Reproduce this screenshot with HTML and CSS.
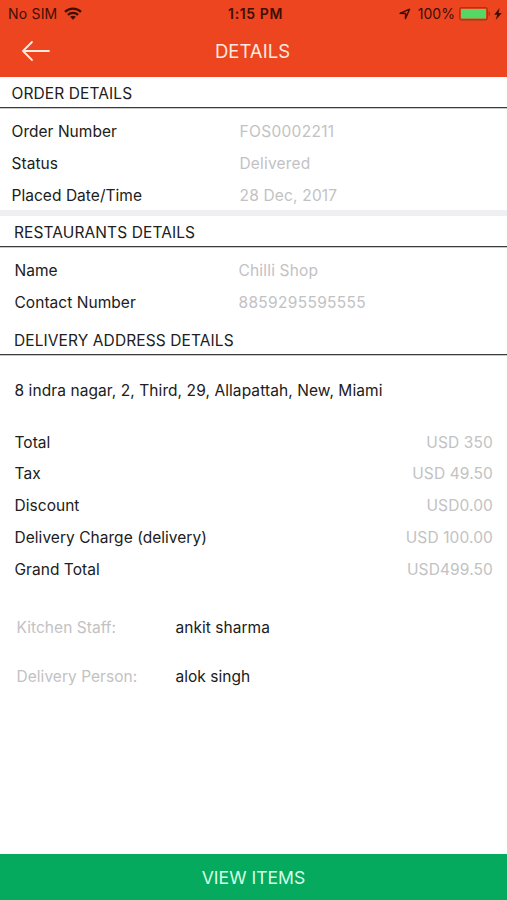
FILE: index.html
```html
<!DOCTYPE html>
<html lang="en">
<head>
<meta charset="utf-8">
<title>Details</title>
<link rel="stylesheet" href="styles.css">
</head>
<body>
<div class="screen">
  <header class="top">
    <div class="status">
      <div class="status-left"><span class="carrier">No SIM</span>
        <svg class="wifi" width="18" height="13" viewBox="0 0 18 13" fill="none" stroke="currentColor" stroke-width="2.3"><path d="M1 4.9C5.5.4 12.5.4 17 4.9M3.9 7.9c2.9-2.8 7.3-2.8 10.2 0"/><path d="M6.1 9.8c1.7-1.5 4.1-1.5 5.8 0L9 12.7z" fill="currentColor" stroke="none"/></svg>
      </div>
      <span class="clock">1:15 PM</span>
      <div class="status-right">
        <svg class="location" width="12" height="12" viewBox="0 0 12 12" fill="none" stroke="currentColor" stroke-width="1.4" stroke-linejoin="round"><path d="M1 5.3 10.6 1.2 6.4 10.6 6.6 5.5z"/></svg>
        <span class="percent">100%</span>
        <svg class="battery" width="32" height="14" viewBox="0 0 32 14"><rect x=".7" y=".7" width="27.6" height="12.1" rx="2" fill="none" stroke="#9c3d12" stroke-width="1.3"/><rect x="2" y="2" width="25" height="9.5" rx=".5" fill="#55d765"/><path d="M29.6 4.5c2 .6 2 4 0 4.6z" fill="#9c3d12"/></svg>
        <svg class="bolt" width="8" height="12" viewBox="0 0 8 12" fill="currentColor"><path d="M5.6 0 .2 6.8h3L1.7 12 7.8 4.9H4.6z"/></svg>
      </div>
    </div>
    <div class="nav">
      <svg class="back" width="30" height="22" viewBox="0 0 30 22" fill="none" stroke="currentColor" stroke-width="1.8" stroke-linecap="round" stroke-linejoin="round"><path d="M28 11H2M11 2 2 11l9 9"/></svg>
      <h1 class="title">DETAILS</h1>
    </div>
  </header>
  <main class="content">
    <section class="order">
      <h2 class="heading">ORDER DETAILS</h2>
      <dl class="rows">
        <div class="row"><dt>Order Number</dt><dd class="digits">FOS0002211</dd></div>
        <div class="row"><dt>Status</dt><dd>Delivered</dd></div>
        <div class="row"><dt>Placed Date/Time</dt><dd>28 Dec, 2017</dd></div>
      </dl>
    </section>
    <section class="restaurant">
      <h2 class="heading">RESTAURANTS DETAILS</h2>
      <dl class="rows">
        <div class="row"><dt>Name</dt><dd>Chilli Shop</dd></div>
        <div class="row"><dt>Contact Number</dt><dd class="digits">8859295595555</dd></div>
      </dl>
    </section>
    <section class="delivery">
      <h2 class="heading">DELIVERY ADDRESS DETAILS</h2>
      <p class="address">8 indra nagar, 2, Third, 29, Allapattah, New, Miami</p>
    </section>
    <dl class="totals">
      <div class="row"><dt>Total</dt><dd>USD 350</dd></div>
      <div class="row"><dt>Tax</dt><dd>USD 49.50</dd></div>
      <div class="row"><dt>Discount</dt><dd>USD0.00</dd></div>
      <div class="row"><dt>Delivery Charge (delivery)</dt><dd>USD 100.00</dd></div>
      <div class="row"><dt>Grand Total</dt><dd>USD499.50</dd></div>
    </dl>
    <dl class="staff">
      <div class="person"><dt>Kitchen Staff:</dt><dd>ankit sharma</dd></div>
      <div class="person"><dt>Delivery Person:</dt><dd>alok singh</dd></div>
    </dl>
  </main>
  <button class="view" type="button">VIEW ITEMS</button>
</div>
</body>
</html>
```
FILE: styles.css
```css
* { box-sizing: border-box; }
body, h1, h2, dl, dt, dd, p { margin: 0; font-weight: 400; }
body { font-family: Inter, "Liberation Sans", sans-serif; font-size: 15.5px; line-height: 20px; letter-spacing: .04px; color: #202020; background: #fff; }
.screen { display: flex; flex-direction: column; height: 900px; overflow: hidden; }
.top { height: 77px; background: #ed451f; flex: none; }
.status { display: grid; grid-template-columns: 1fr auto 1fr; align-items: center; height: 27px; padding: 0 5px 0 8px; color: #3f0e05; font-size: 14px; }
.status-left, .status-right { display: flex; align-items: center; }
.carrier { letter-spacing: .2px; }
.wifi { margin-left: 7px; }
.clock { padding-left: 1px; font-weight: 600; letter-spacing: .6px; }
.status-right { justify-content: flex-end; }
.percent { margin: 0 4px 0 7px; }
.bolt { margin-left: 3px; }
.nav { display: grid; grid-template-columns: 60px 1fr 60px; align-items: center; height: 48px; color: #ffe9df; }
.back { margin-left: 21px; }
.title { padding: 0 2px 1px 0; text-align: center; font-size: 18.5px; line-height: 24px; }
.content { flex: 1; }
.heading { height: 31px; padding: 7px 14px 0; border-bottom: 1px solid #3c3c3e; box-shadow: 0 1px #c9c9ca; font-size: 15.5px; letter-spacing: .1px; }
.row { display: flex; height: 31.8px; align-items: center; }
.rows .row { display: grid; grid-template-columns: 224px 1fr; }
.rows dd, .totals dd, .staff dt { color: #c2c2c4; }
.rows dd { letter-spacing: .18px; }
.rows .digits { letter-spacing: .32px; }
.totals dd { letter-spacing: .12px; }
.order .heading, .order .row { padding-left: 11.5px; }
.order .row { grid-template-columns: 228px 1fr; }
.order .rows { height: 102px; padding-top: 8.4px; }
.restaurant { border-top: 6px solid #eeeef3; }
.restaurant .row { padding-left: 14.5px; }
.restaurant .rows { height: 77px; padding-top: 8.4px; }
.address { padding: 26px 14.5px 0; letter-spacing: .08px; }
.totals { padding: 25.7px 14px 0 14.5px; }
.totals .row { justify-content: space-between; }
.staff { padding: 18px 16.5px 0; }
.person { display: grid; grid-template-columns: 159px 1fr; align-items: center; height: 49px; }
.view { flex: none; height: 46px; padding: 2px 0 0; border: 0; background: #05aa5f; color: #d5ffe4; font: 400 17.6px/24px Inter, "Liberation Sans", sans-serif; }
```
